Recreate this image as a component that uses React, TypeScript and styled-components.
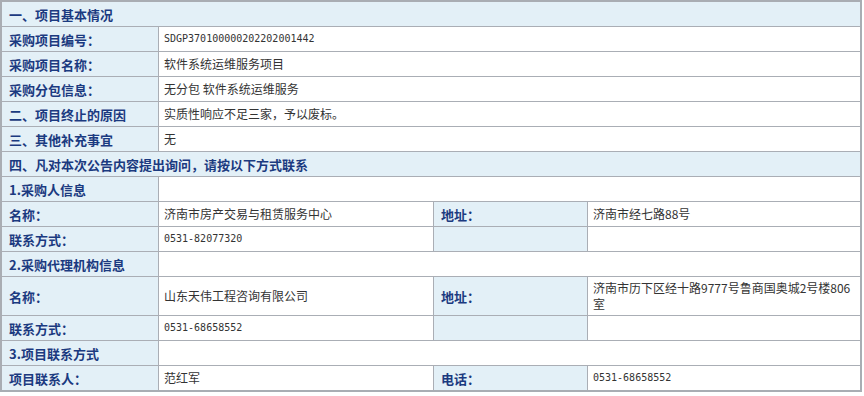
import React from "react";
import styled, { createGlobalStyle } from "styled-components";

const GlobalStyle = createGlobalStyle`
  html, body {
    margin: 0;
    padding: 0;
    background: #ffffff;
  }
  body {
    font-family: "Noto Sans CJK SC", "Liberation Sans", sans-serif;
    font-size: 12px;
    color: #333333;
  }
`;

const Sheet = styled.div`
  width: 862px;
  box-sizing: border-box;
  border: 2px solid #a9adb3;
  background-color: #aaaeb5;
  display: grid;
  grid-template-columns: 156px 274px 153px 272px;
  grid-auto-rows: minmax(24px, auto);
  gap: 1px;
`;

const Cell = styled.div<{ $span?: number }>`
  grid-column: span ${(p) => p.$span || 1};
  display: flex;
  align-items: center;
  min-width: 0;
`;

const Label = styled(Cell)`
  background-color: #e3f0f7;
  color: #1b3a80;
  font-weight: bold;
  font-size: 13px;
  padding: 0 6px 0 7px;
  white-space: nowrap;
`;

const Value = styled(Cell)`
  background-color: #ffffff;
  color: #333333;
  font-size: 12px;
  line-height: 16px;
  padding: 3px 6px 3px 5px;
`;

const Num = styled.span`
  font-family: "DejaVu Sans Mono", monospace;
  font-size: 10px;
`;

type Row =
  | { kind: "section"; title: string }
  | { kind: "pair"; label: string; value?: React.ReactNode }
  | {
      kind: "quad";
      label: string;
      value: React.ReactNode;
      label2: string;
      value2: React.ReactNode;
    };

const rows: Row[] = [
  { kind: "section", title: "一、项目基本情况" },
  { kind: "pair", label: "采购项目编号：", value: <Num>SDGP370100000202202001442</Num> },
  { kind: "pair", label: "采购项目名称：", value: "软件系统运维服务项目" },
  { kind: "pair", label: "采购分包信息：", value: "无分包 软件系统运维服务" },
  { kind: "pair", label: "二、项目终止的原因", value: "实质性响应不足三家，予以废标。" },
  { kind: "pair", label: "三、其他补充事宜", value: "无" },
  { kind: "section", title: "四、凡对本次公告内容提出询问，请按以下方式联系" },
  { kind: "pair", label: "1.采购人信息" },
  {
    kind: "quad",
    label: "名称：",
    value: "济南市房产交易与租赁服务中心",
    label2: "地址：",
    value2: "济南市经七路88号",
  },
  {
    kind: "quad",
    label: "联系方式：",
    value: <Num>0531-82077320</Num>,
    label2: "",
    value2: "",
  },
  { kind: "pair", label: "2.采购代理机构信息" },
  {
    kind: "quad",
    label: "名称：",
    value: "山东天伟工程咨询有限公司",
    label2: "地址：",
    value2: "济南市历下区经十路9777号鲁商国奥城2号楼806室",
  },
  {
    kind: "quad",
    label: "联系方式：",
    value: <Num>0531-68658552</Num>,
    label2: "",
    value2: "",
  },
  { kind: "pair", label: "3.项目联系方式" },
  {
    kind: "quad",
    label: "项目联系人：",
    value: "范红军",
    label2: "电话：",
    value2: <Num>0531-68658552</Num>,
  },
];

export default function App() {
  return (
    <>
      <GlobalStyle />
      <Sheet>
        {rows.map((row, i) => {
          if (row.kind === "section") {
            return (
              <Label key={i} $span={4}>
                {row.title}
              </Label>
            );
          }
          if (row.kind === "pair") {
            return (
              <React.Fragment key={i}>
                <Label>{row.label}</Label>
                <Value $span={3}>{row.value}</Value>
              </React.Fragment>
            );
          }
          return (
            <React.Fragment key={i}>
              <Label>{row.label}</Label>
              <Value>{row.value}</Value>
              <Label>{row.label2}</Label>
              <Value>{row.value2}</Value>
            </React.Fragment>
          );
        })}
      </Sheet>
    </>
  );
}
